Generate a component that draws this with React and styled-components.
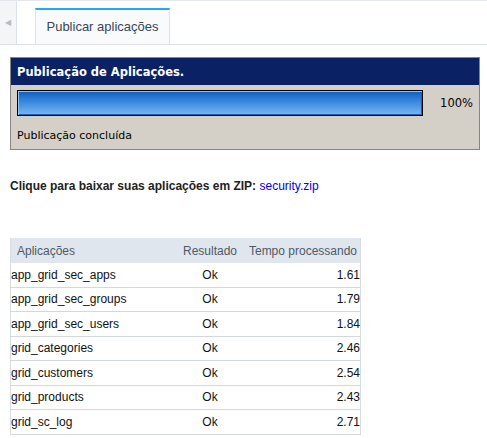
import * as React from 'react';
import styled, { createGlobalStyle } from 'styled-components';

const GlobalStyle = createGlobalStyle`
  html, body {
    margin: 0;
    padding: 0;
    background: #fff;
  }
  body {
    font-family: "Liberation Sans", Arial, sans-serif;
    font-size: 12px;
    color: #000;
  }
`;

const TabBar = styled.div`
  display: flex;
  height: 43px;
  background: #fff;
  border-top: 1px solid #e4e8ec;
  border-bottom: 1px solid #dde2e7;
`;

const ScrollButton = styled.div`
  width: 16px;
  background: #f3f5f7;
  border-right: 1px solid #dde2e7;
  display: flex;
  align-items: center;
  justify-content: center;
  color: #b5bcc3;
  font-size: 8px;
`;

const Tab = styled.div`
  margin: 7px 0 0 18px;
  width: 133px;
  border-top: 2px solid #25a8ee;
  border-left: 1px solid #dde2e7;
  border-right: 1px solid #dde2e7;
  background: #f8fafc;
  display: flex;
  align-items: center;
  justify-content: center;
  font-size: 13px;
  color: #3b4556;
  padding-bottom: 1px;
`;

const Content = styled.div`
  padding: 12px 7px 0 10px;
`;

const Panel = styled.div`
  border: 1px solid #858585;
  background: #d4d0c8;
  font-family: Tahoma, "DejaVu Sans", sans-serif;
  font-size: 11px;
`;

const PanelHeader = styled.div`
  background: #0a2263;
  color: #fff;
  font-weight: bold;
  font-size: 11.5px;
  height: 27px;
  padding: 0 6px;
  display: flex;
  align-items: center;
`;

const ProgressRow = styled.div`
  display: flex;
  align-items: center;
  padding: 5px 0 0 6px;
`;

const ProgressTrack = styled.div`
  width: 404px;
  height: 24px;
  border: 1px solid #000;
  background: #fff;
`;

const ProgressFill = styled.div`
  height: 100%;
  background: linear-gradient(#0f5bc2 0%, #3889de 45%, #7ab8ef 100%);
  box-shadow: inset 1px 1px 0 #8fc4f5, inset -1px -1px 0 #1a5fb8;
`;

const Percent = styled.div`
  margin-left: auto;
  padding-right: 6px;
  font-size: 11.5px;
  color: #000;
`;

const Status = styled.div`
  padding: 13px 6px 7px;
`;

const Download = styled.p`
  margin: 29px 0 0;
  font-weight: bold;
  color: #222;
  a {
    font-weight: normal;
    color: #0000ee;
    text-decoration: none;
  }
`;

const Table = styled.table`
  margin-top: 45px;
  border-collapse: collapse;
  width: 351px;
  border-left: 1px solid #d6dce2;
  border-right: 1px solid #d6dce2;
`;

const HeadCell = styled.th`
  background: #dfe6ee;
  color: #4f5a66;
  font-weight: normal;
  height: 25px;
  padding: 0 ${(p) => (p.$first ? '6px' : '0')};
  text-align: ${(p) => p.$align || 'center'};
  white-space: nowrap;
`;

const Cell = styled.td`
  height: 23.5px;
  padding: 0;
  border-bottom: 1px solid #d3d8de;
  text-align: ${(p) => p.$align || 'left'};
  color: #111;
  white-space: nowrap;
`;

const rows = [
  ['app_grid_sec_apps', '1.61'],
  ['app_grid_sec_groups', '1.79'],
  ['app_grid_sec_users', '1.84'],
  ['grid_categories', '2.46'],
  ['grid_customers', '2.54'],
  ['grid_products', '2.43'],
  ['grid_sc_log', '2.71'],
];

export default function App() {
  return (
    <>
      <GlobalStyle />
      <TabBar>
        <ScrollButton>◀</ScrollButton>
        <Tab>Publicar aplicações</Tab>
      </TabBar>
      <Content>
        <Panel>
          <PanelHeader>Publicação de Aplicações.</PanelHeader>
          <ProgressRow>
            <ProgressTrack>
              <ProgressFill style={{ width: '100%' }} />
            </ProgressTrack>
            <Percent>100%</Percent>
          </ProgressRow>
          <Status>Publicação concluída</Status>
        </Panel>
        <Download>
          Clique para baixar suas aplicações em ZIP: <a href="#">security.zip</a>
        </Download>
        <Table>
          <thead>
            <tr>
              <HeadCell $first $align="left">Aplicações</HeadCell>
              <HeadCell style={{ width: 72 }}>Resultado</HeadCell>
              <HeadCell style={{ width: 114 }}>Tempo processando</HeadCell>
            </tr>
          </thead>
          <tbody>
            {rows.map(([name, time]) => (
              <tr key={name}>
                <Cell>{name}</Cell>
                <Cell $align="center">Ok</Cell>
                <Cell $align="right">{time}</Cell>
              </tr>
            ))}
          </tbody>
        </Table>
      </Content>
    </>
  );
}
